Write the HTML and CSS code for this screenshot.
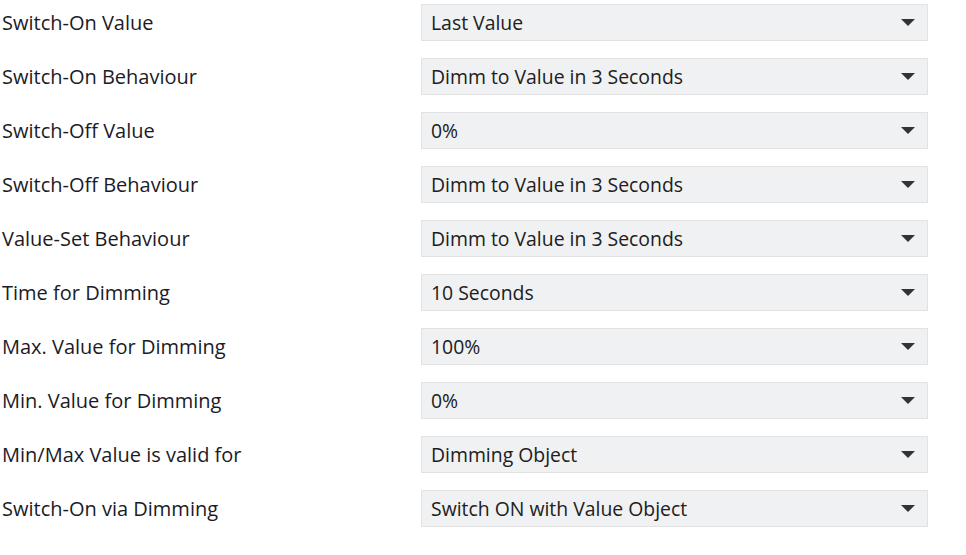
FILE: index.html
```html
<!DOCTYPE html>
<html>
<head>
<meta charset="utf-8">
<link rel="stylesheet" href="styles.css">
</head>
<body>
<div class="form">
  <div class="row"><div class="label">Switch-On Value</div><div class="select"><span class="value">Last Value</span><span class="arrow"></span></div></div>
  <div class="row"><div class="label">Switch-On Behaviour</div><div class="select"><span class="value">Dimm to Value in 3 Seconds</span><span class="arrow"></span></div></div>
  <div class="row"><div class="label">Switch-Off Value</div><div class="select"><span class="value">0%</span><span class="arrow"></span></div></div>
  <div class="row"><div class="label">Switch-Off Behaviour</div><div class="select"><span class="value">Dimm to Value in 3 Seconds</span><span class="arrow"></span></div></div>
  <div class="row"><div class="label">Value-Set Behaviour</div><div class="select"><span class="value">Dimm to Value in 3 Seconds</span><span class="arrow"></span></div></div>
  <div class="row"><div class="label">Time for Dimming</div><div class="select"><span class="value">10 Seconds</span><span class="arrow"></span></div></div>
  <div class="row"><div class="label">Max. Value for Dimming</div><div class="select"><span class="value">100%</span><span class="arrow"></span></div></div>
  <div class="row"><div class="label">Min. Value for Dimming</div><div class="select"><span class="value">0%</span><span class="arrow"></span></div></div>
  <div class="row"><div class="label">Min/Max Value is valid for</div><div class="select"><span class="value">Dimming Object</span><span class="arrow"></span></div></div>
  <div class="row"><div class="label">Switch-On via Dimming</div><div class="select"><span class="value">Switch ON with Value Object</span><span class="arrow"></span></div></div>
</div>
</body>
</html>
```
FILE: styles.css
```css
html, body {
  margin: 0;
  padding: 0;
  background: #ffffff;
}
.form {
  display: flex;
  flex-direction: column;
  gap: 17px;
  padding: 4px 0 0 2px;
  font-family: "Open Sans", "Noto Sans", sans-serif;
}
.row {
  display: flex;
  align-items: center;
  height: 37px;
}
.label {
  width: 419px;
  font-size: 20px;
  color: #1b1b26;
  white-space: nowrap;
}
.select {
  box-sizing: border-box;
  width: 507px;
  height: 37px;
  background: #f0f1f2;
  border: 1px solid #e2e2e2;
  display: flex;
  align-items: center;
  justify-content: space-between;
  padding: 0 12px 0 9px;
}
.value {
  font-size: 19.4px;
  color: #202020;
}
.arrow {
  width: 0;
  height: 0;
  border-left: 7px solid transparent;
  border-right: 7px solid transparent;
  border-top: 7px solid #333333;
}
```
